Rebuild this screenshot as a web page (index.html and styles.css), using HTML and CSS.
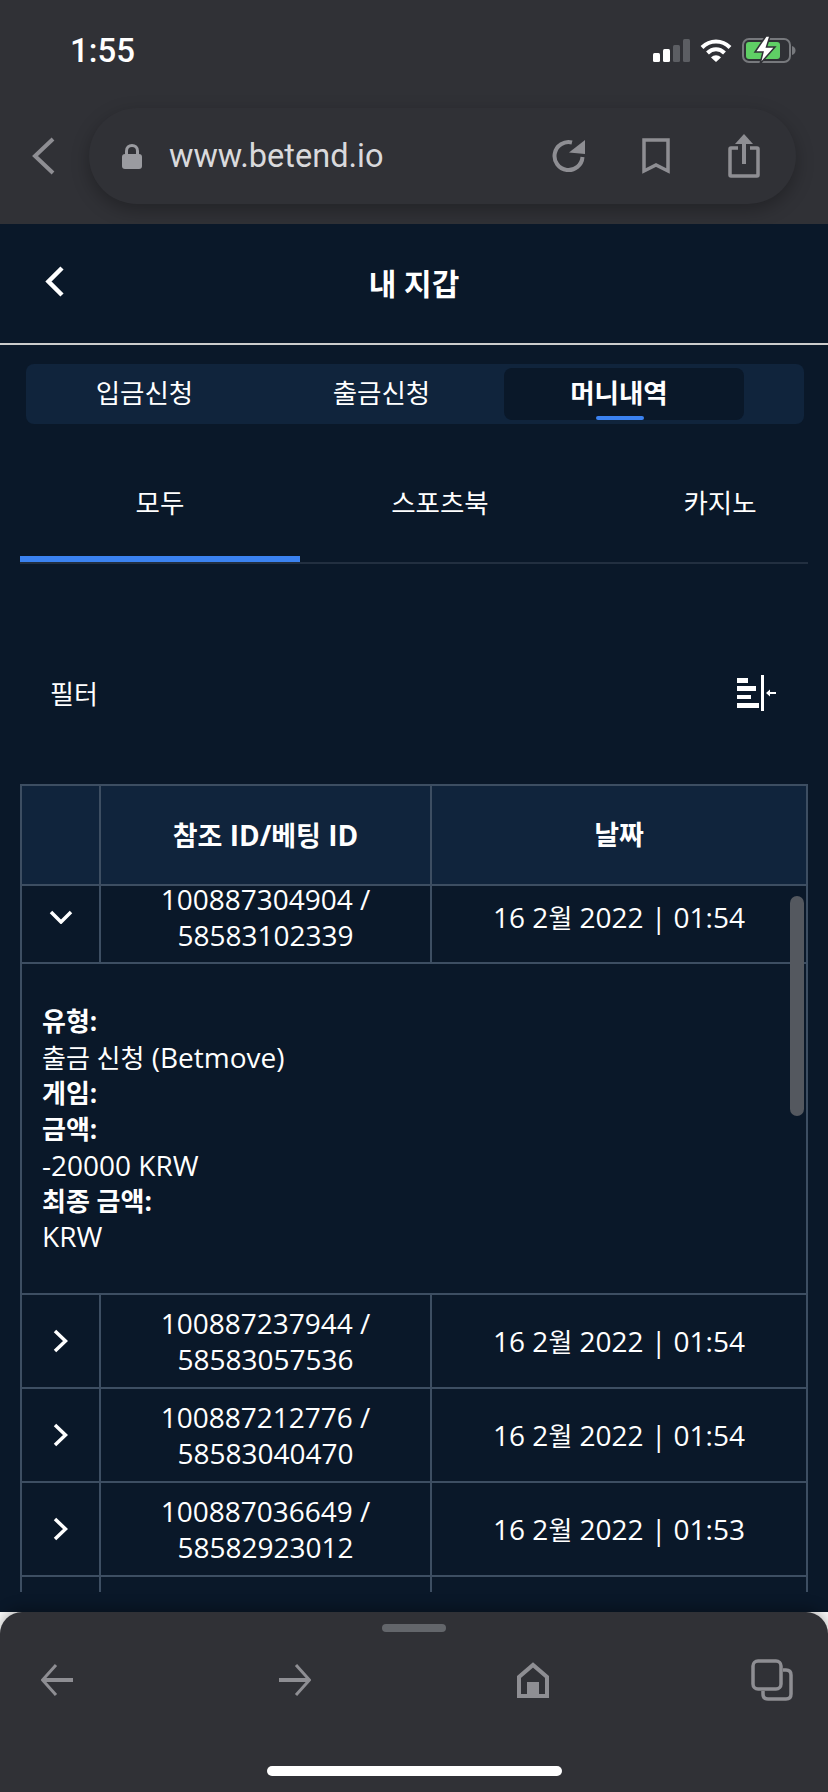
FILE: index.html
```html
<!DOCTYPE html>
<html lang="ko">
<head>
  <meta charset="UTF-8" />
  <meta name="viewport" content="width=device-width, initial-scale=1.0"/>
  <title>내 지갑</title>
  <link rel="stylesheet" href="styles.css">
</head>
<body>
  <div class="chrome">
    <div class="status-bar">
      <span class="time">1:55</span>
      <div class="status-icons">
        <svg class="signal" width="37" height="23" viewBox="0 0 37 23">
          <rect x="0" y="14" width="7" height="9" rx="1.5" fill="#fff"/>
          <rect x="10" y="10" width="7" height="13" rx="1.5" fill="#fff"/>
          <rect x="20" y="6" width="7" height="17" rx="1.5" fill="#5c5e63"/>
          <rect x="30" y="0" width="7" height="23" rx="1.5" fill="#5c5e63"/>
        </svg>
        <svg class="wifi" width="32" height="24" viewBox="0 0 32 24">
          <path d="M2 9.500C10 1.500 22 1.500 30 9.500" fill="none" stroke="#fff" stroke-width="4"/>
          <path d="M7.500 15C12.500 10 19.500 10 24.500 15" fill="none" stroke="#fff" stroke-width="4"/>
          <path d="M11 19.500C14 16.500 18 16.500 21 19.500L16 24Z" fill="#fff"/>
        </svg>
        <svg class="battery" width="54" height="28" viewBox="0 0 54 28">
          <rect x="1" y="3" width="47" height="23" rx="6" fill="none" stroke="#77797d" stroke-width="2"/>
          <rect x="4" y="6" width="34" height="17" rx="3" fill="#5fcf65"/>
          <path d="M50 10C52.500 10.500 53.500 12.500 53.500 14.500C53.500 16.500 52.500 18.500 50 19Z" fill="#77797d"/>
          <path d="M24 0L13 16H21L18 28L33 11H24.500L28 0Z" fill="#fff" stroke="#303136" stroke-width="1.500"/>
        </svg>
      </div>
    </div>
    <div class="address-row">
      <svg class="nav-back" width="23" height="38" viewBox="0 0 23 38">
        <path d="M21 2L3 19L21 36" fill="none" stroke="#8e8e93" stroke-width="4"/>
      </svg>
      <div class="address-pill">
        <svg class="lock" width="20" height="25" viewBox="0 0 20 25">
          <path d="M4.500 11V7C4.500 3.500 7 1.500 10 1.500C13 1.500 15.500 3.500 15.500 7V11" fill="none" stroke="#9a9ba0" stroke-width="3"/>
          <rect x="0" y="10" width="20" height="15" rx="3" fill="#9a9ba0"/>
        </svg>
        <span class="url">www.betend.io</span>
        <svg class="reload" width="33" height="33" viewBox="0 0 33 33">
          <path d="M20 2.500A14 14 0 1 0 30.500 17" fill="none" stroke="#8e8e93" stroke-width="4"/>
          <path d="M33 0V14L17 12.500Z" fill="#8e8e93"/>
        </svg>
        <svg class="bookmark" width="28" height="36" viewBox="0 0 28 36">
          <path d="M2 2H26V33L14 27L2 33Z" fill="none" stroke="#8e8e93" stroke-width="3.500"/>
        </svg>
        <svg class="share" width="32" height="44" viewBox="0 0 32 44">
          <path d="M10 14H3C2 14 2 15 2 15V41C2 42 3 42 3 42H29C30 42 30 41 30 41V15C30 14 29 14 29 14H22" fill="none" stroke="#8e8e93" stroke-width="3.500"/>
          <path d="M16 30V4" stroke="#8e8e93" stroke-width="4"/>
          <path d="M16 0L25 10H7Z" fill="#8e8e93"/>
        </svg>
      </div>
    </div>
  </div>

  <div class="page">
    <div class="page-header">
      <svg class="header-back" width="19" height="31" viewBox="0 0 19 31">
        <path d="M17 2L3.500 15.500L17 29" fill="none" stroke="#fff" stroke-width="4.500"/>
      </svg>
      <h1 class="page-title">내 지갑</h1>
    </div>

    <div class="segment-bar">
      <div class="segment">입금신청</div>
      <div class="segment">출금신청</div>
      <div class="segment active">머니내역</div>
    </div>

    <div class="sub-tabs">
      <div class="sub-tab active">모두</div>
      <div class="sub-tab">스포츠북</div>
      <div class="sub-tab">카지노</div>
    </div>

    <div class="filter-row">
      <span class="filter-label">필터</span>
      <svg class="filter-icon" width="39" height="36" viewBox="0 0 39 36">
        <rect x="0" y="3" width="11" height="5" fill="#fff"/>
        <rect x="0" y="11" width="19" height="5" fill="#fff"/>
        <rect x="0" y="20" width="14" height="4" fill="#fff"/>
        <rect x="0" y="28" width="22" height="5" fill="#fff"/>
        <rect x="24" y="0" width="3" height="36" fill="#fff"/>
        <path d="M29 18L33 14.500V17H39V19H33V21.500Z" fill="#fff"/>
      </svg>
    </div>

    <div class="data-table">
      <div class="row head-row">
        <div class="cell"></div>
        <div class="cell"><span><span class="ko">참조</span> ID/<span class="ko">베팅</span> ID</span></div>
        <div class="cell"><span class="ko">날짜</span></div>
      </div>
      <div class="table-body">
        <div class="row first-row">
          <div class="cell">
            <svg width="24" height="14" viewBox="0 0 24 14"><path d="M2 2L12 12L22 2" fill="none" stroke="#fff" stroke-width="3.500"/></svg>
          </div>
          <div class="cell">
            <span class="id-line">100887304904 /</span>
            <span class="id-line">58583102339</span>
          </div>
          <div class="cell"><span>16 2<span class="ko">월</span> 2022 | 01:54</span></div>
        </div>
        <div class="detail">
          <strong class="ko">유형:</strong>
          <span><span class="ko">출금 신청</span> (Betmove)</span>
          <strong class="ko">게임:</strong>
          <strong class="ko">금액:</strong>
          <span>-20000 KRW</span>
          <strong class="ko">최종 금액:</strong>
          <span>KRW</span>
        </div>
        <div class="row">
          <div class="cell">
            <svg width="15" height="24" viewBox="0 0 15 24"><path d="M2 2L12.500 12L2 22" fill="none" stroke="#fff" stroke-width="3.500"/></svg>
          </div>
          <div class="cell"><span>100887237944 /<br>58583057536</span></div>
          <div class="cell"><span>16 2<span class="ko">월</span> 2022 | 01:54</span></div>
        </div>
        <div class="row">
          <div class="cell">
            <svg width="15" height="24" viewBox="0 0 15 24"><path d="M2 2L12.500 12L2 22" fill="none" stroke="#fff" stroke-width="3.500"/></svg>
          </div>
          <div class="cell"><span>100887212776 /<br>58583040470</span></div>
          <div class="cell"><span>16 2<span class="ko">월</span> 2022 | 01:54</span></div>
        </div>
        <div class="row">
          <div class="cell">
            <svg width="15" height="24" viewBox="0 0 15 24"><path d="M2 2L12.500 12L2 22" fill="none" stroke="#fff" stroke-width="3.500"/></svg>
          </div>
          <div class="cell"><span>100887036649 /<br>58582923012</span></div>
          <div class="cell"><span>16 2<span class="ko">월</span> 2022 | 01:53</span></div>
        </div>
        <div class="row last-row">
          <div class="cell"></div>
          <div class="cell"></div>
          <div class="cell"></div>
        </div>
        <div class="scroll-thumb"></div>
      </div>
    </div>
  </div>

  <div class="sheet">
    <div class="sheet-handle"></div>
    <div class="sheet-icons">
      <svg width="32" height="32" viewBox="0 0 32 32">
        <path d="M15 1L1.500 16L15 31" fill="none" stroke="#8e8e93" stroke-width="3"/>
        <path d="M2 16H32" stroke="#8e8e93" stroke-width="4"/>
      </svg>
      <svg width="32" height="32" viewBox="0 0 32 32">
        <path d="M17 1L30.500 16L17 31" fill="none" stroke="#8e8e93" stroke-width="3"/>
        <path d="M0 16H30" stroke="#8e8e93" stroke-width="4"/>
      </svg>
      <svg class="home-icon" width="32" height="36" viewBox="0 0 32 36">
        <path d="M2 34V15L16 3L30 15V34Z" fill="none" stroke="#8e8e93" stroke-width="4"/>
        <rect x="10" y="20" width="12" height="16" fill="#8e8e93"/>
      </svg>
      <svg class="tabs-icon" width="42" height="42" viewBox="0 0 42 42">
        <rect x="2" y="2" width="28" height="28" rx="5" fill="none" stroke="#8e8e93" stroke-width="3.500"/>
        <path d="M32 11H35C38.500 11 40 12.500 40 16V35C40 38.500 38.500 40 35 40H17C13.500 40 12 38.500 12 35V32" fill="none" stroke="#8e8e93" stroke-width="3.500"/>
      </svg>
    </div>
    <div class="home-indicator"></div>
  </div>
</body>
</html>
```

FILE: styles.css
```css
* {
  box-sizing: border-box;
}

body {
  margin: 0;
  width: 828px;
  height: 1792px;
  overflow: hidden;
  background-color: #fff;
  color: #fff;
  font-family: 'Open Sans', 'Noto Sans CJK KR', sans-serif;
  display: flex;
  flex-direction: column;
}

svg {
  display: block;
  flex: none;
}

/* browser chrome */
.chrome {
  height: 224px;
  padding-top: 34px;
  background-color: #303136;
}

.status-bar {
  height: 32px;
  padding: 0 32px 0 70px;
  display: flex;
  align-items: center;
  justify-content: space-between;
}

.time {
  font-family: Roboto, sans-serif;
  font-size: 33px;
  font-weight: 500;
}

.status-icons {
  display: flex;
  align-items: center;
  gap: 10px;
}

.address-row {
  margin-top: 42px;
  padding-left: 32px;
  display: flex;
  align-items: center;
}

.address-pill {
  width: 707px;
  height: 96px;
  margin-left: 34px;
  padding: 0 36px 0 33px;
  border-radius: 48px;
  background-color: #303136;
  box-shadow: 0 6px 18px rgba(0, 0, 0, 0.28);
  display: flex;
  align-items: center;
}

.url {
  flex: 1;
  margin-left: 27px;
  color: #d9d9dc;
  font-family: Roboto, sans-serif;
  font-size: 32.5px;
}

.bookmark {
  margin-left: 57px;
}

.share {
  margin-left: 58px;
}

/* page */
.page {
  flex: 1;
  min-height: 0;
  background-color: #0a1829;
}

.page-header {
  position: relative;
  height: 121px;
  padding-bottom: 3px;
  border-bottom: 2px solid #ccc;
  display: flex;
  align-items: center;
  justify-content: center;
}

.header-back {
  position: absolute;
  left: 45px;
  top: 42px;
}

.page-title {
  margin: 0;
  font-size: 30px;
  font-weight: 700;
}

.segment-bar {
  width: 778px;
  height: 60px;
  margin: 19px 0 0 26px;
  padding: 4px 0;
  border-radius: 8px;
  background-color: #10243c;
  display: flex;
}

.segment {
  width: 237px;
  font-size: 26.5px;
  line-height: 50px;
  text-align: center;
}

.segment.active {
  position: relative;
  width: 240px;
  margin-left: 4px;
  padding-right: 10px;
  border-radius: 8px;
  background-color: #0a1829;
  font-weight: 700;
}

.segment.active::after {
  content: "";
  position: absolute;
  left: 92px;
  bottom: 0;
  width: 48px;
  height: 4px;
  border-radius: 2px;
  background-color: #3b82f0;
}

.sub-tabs {
  width: 788px;
  margin-left: 20px;
  overflow: hidden;
  border-bottom: 2px solid #222f40;
  display: flex;
}

.sub-tab {
  flex: none;
  width: 280px;
  padding: 60px 0 34px;
  border-bottom: 6px solid transparent;
  font-size: 26.5px;
  line-height: 38px;
  text-align: center;
}

.sub-tab.active {
  border-bottom-color: #3b82f0;
}

.filter-row {
  height: 54px;
  margin: 102px 0 64px;
  padding: 0 52px 0 50px;
  display: flex;
  align-items: center;
  justify-content: space-between;
}

.filter-label {
  font-size: 26px;
}

/* table */
.data-table {
  width: 788px;
  margin-left: 20px;
  border-top: 2px solid #3d4e62;
  border-left: 2px solid #3d4e62;
  border-right: 2px solid #3d4e62;
}

.row {
  height: 94px;
  border-bottom: 2px solid #3d4e62;
  display: grid;
  grid-template-columns: 79px 331px 1fr;
  font-size: 28px;
  line-height: 36px;
  text-align: center;
}

.cell {
  display: flex;
  align-items: center;
  justify-content: center;
}

.cell:not(:last-child) {
  border-right: 2px solid #3d4e62;
}

/* hangul runs a little smaller than the latin around it */
.ko {
  font-size: 26px;
}

.head-row {
  height: 100px;
  background-color: #10243c;
  font-weight: 700;
}

.head-row .ko {
  font-size: 27px;
}

.table-body {
  position: relative;
}

/* body is scrolled a little, so the first row shows only its lower part */
.first-row {
  height: 78px;
  grid-template-rows: 76px;
}

.first-row .cell {
  padding-bottom: 14px;
  flex-direction: column;
}

.id-line {
  line-height: 28px;
}

.id-line + .id-line {
  margin-top: 8px;
}

/* next row is just starting to show above the bottom sheet */
.last-row {
  height: 15px;
  border-bottom: none;
}

.detail {
  height: 331px;
  padding: 40px 0 0 20px;
  border-bottom: 2px solid #3d4e62;
  font-size: 28px;
  line-height: 35.7px;
  display: flex;
  flex-direction: column;
}

.detail strong {
  font-weight: 700;
}

.scroll-thumb {
  position: absolute;
  top: 10px;
  right: 2px;
  width: 14px;
  height: 220px;
  border-radius: 7px;
  background-color: #54585f;
}

/* bottom sheet */
.sheet {
  height: 180px;
  padding-top: 12px;
  border-radius: 22px 22px 0 0;
  background-color: #303136;
  box-shadow: 0 -4px 14px rgba(0, 0, 0, 0.3);
}

.sheet-handle {
  width: 64px;
  height: 8px;
  margin: 0 auto;
  border-radius: 4px;
  background-color: #63666b;
}

.sheet-icons {
  height: 42px;
  margin-top: 27px;
  padding-left: 41px;
  display: flex;
  align-items: center;
  gap: 206px;
}

.tabs-icon {
  margin-left: -4px;
}

.home-indicator {
  width: 295px;
  height: 10px;
  margin: 65px 0 0 267px;
  border-radius: 5px;
  background-color: #fff;
}
```
